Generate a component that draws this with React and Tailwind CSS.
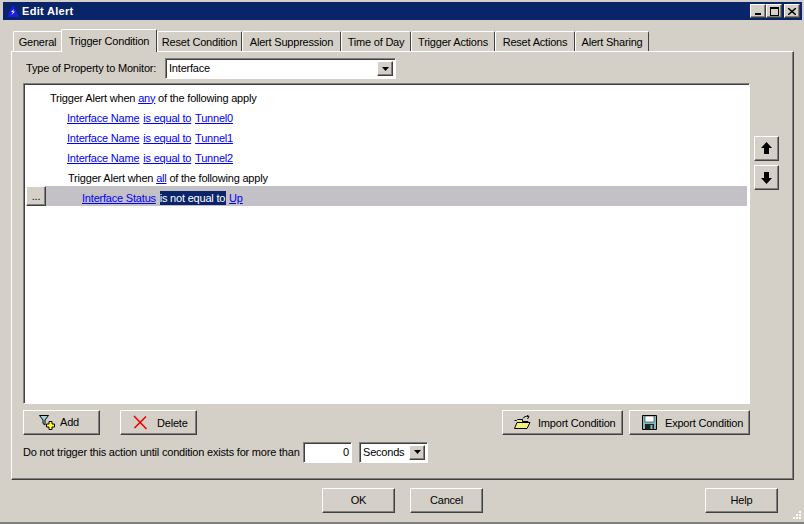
const raised = 'border border-t-white border-l-white border-r-[#404040] border-b-[#404040] shadow-[inset_-1px_-1px_0_#808080]';
const sunken = 'border border-t-[#808080] border-l-[#808080] border-r-white border-b-white shadow-[inset_1px_1px_0_#404040]';

const tabs = [
    { label: 'General', w: 'w-[49px]' },
    { label: 'Trigger Condition', w: 'w-[96px]', active: true },
    { label: 'Reset Condition', w: 'w-[85px]' },
    { label: 'Alert Suppression', w: 'w-[99px]' },
    { label: 'Time of Day', w: 'w-[70px]' },
    { label: 'Trigger Actions', w: 'w-[84px]' },
    { label: 'Reset Actions', w: 'w-[80px]' },
    { label: 'Alert Sharing', w: 'w-[74px]' },
];

function Link({ className = '', children }) {
    return <span className={`text-[#0000ff] underline ${className}`}>{children}</span>;
}

function Arrow() {
    return (
        <div className={`w-[16px] h-full flex items-center justify-center bg-[#d4d0c8] ${raised}`}>
            <svg width="7" height="4" viewBox="0 0 7 4"><path d="M0 0h7L3.5 4z" fill="#000" /></svg>
        </div>
    );
}

function Button({ className = '', children }) {
    return <div className={`flex items-center h-[25px] bg-[#d4d0c8] ${raised} ${className}`}>{children}</div>;
}

function FilterAddIcon() {
    return (
        <svg width="16" height="16" viewBox="0 0 16 16" className="shrink-0">
            <path d="M0.5 0.5h9L6 5v5L4 8.5V5z" fill="#9fd4d4" stroke="#000" />
            <path d="M10 6.5h3V9h2.5v3H13v2.5h-3V12H7.5V9H10z" fill="#ffff33" stroke="#000" />
        </svg>
    );
}

function DeleteIcon() {
    return (
        <svg width="15" height="15" viewBox="0 0 15 15" className="shrink-0">
            <path d="M1 1L13.5 14M13 1.5L1.5 13" stroke="#f00000" strokeWidth="1.6" fill="none" />
        </svg>
    );
}

function FolderIcon() {
    return (
        <svg width="17" height="15" viewBox="0 0 17 15" className="shrink-0">
            <path d="M0.5 5.5h2l1-1h5v2H14v1.5" fill="#e8e880" stroke="#000" />
            <path d="M0.5 13.5L3 7.5h13l-3 6z" fill="#f2f27a" stroke="#000" />
            <path d="M9 3.5C10 1.5 12 1 14.5 1.5M13 0l2 1.5L13.5 4" stroke="#000" fill="none" />
        </svg>
    );
}

function SaveIcon() {
    return (
        <svg width="15" height="15" viewBox="0 0 15 15" className="shrink-0">
            <path d="M0.5 0.5h14v14h-14z" fill="#7fbcc0" stroke="#000" />
            <path d="M3 1h9v6H3z" fill="#fff" stroke="#000" strokeWidth="0.5" />
            <path d="M3 9h9v5.5H3z" fill="#222" />
            <path d="M8.5 10h2v4h-2z" fill="#7fbcc0" />
        </svg>
    );
}

function WinButton({ children }) {
    return <div className={`w-[16px] h-[14px] bg-[#d4d0c8] flex items-center justify-center ${raised}`}>{children}</div>;
}

export default function App() {
    return (
        <div className="w-[804px] h-[524px] bg-[#d4d0c8] text-[11px] leading-none tracking-[-0.2px] text-black flex flex-col pt-[2px] border-b-2 border-[#808080]" style={{ fontFamily: '"Liberation Sans", sans-serif' }}>
            {/* Title bar */}
            <div className="ml-[3px] mr-[2px] h-[18px] bg-[#0a246a] flex items-center pl-[4px] pr-[2px] shrink-0">
                <svg width="12" height="12" viewBox="0 0 12 12" className="shrink-0">
                    <path d="M6 0L12 12H0z" fill="#1c1ce0" />
                    <path d="M7 4L4 7h2L4.5 10 8 6.5H6z" fill="#fff" />
                </svg>
                <span className="ml-[3px] text-white font-bold text-[11px] tracking-[0.3px]">Edit Alert</span>
                <div className="ml-auto flex">
                    <WinButton><div className="w-[6px] h-[2px] bg-black mt-[6px] mr-[1px]" /></WinButton>
                    <WinButton><div className="w-[9px] h-[9px] border border-black border-t-2" /></WinButton>
                    <div className="w-[2px]" />
                    <WinButton>
                        <svg width="8" height="7" viewBox="0 0 8 7"><path d="M0 0l8 7M8 0L0 7" stroke="#000" strokeWidth="1.4" /></svg>
                    </WinButton>
                </div>
            </div>

            {/* Tabs */}
            <div className="flex items-end h-[31px] ml-[13px] shrink-0 relative z-10">
                {tabs.map(tab => (
                    <div
                        key={tab.label}
                        className={`${tab.w} flex items-center justify-center bg-[#d4d0c8] border-t border-l border-r border-t-white border-l-white border-r-[#404040] rounded-t-[2px] pt-[2px] ${tab.active ? 'h-[23px] pb-[2px] -mb-px -ml-[1px]' : 'h-[20px]'}`}
                    >
                        {tab.label}
                    </div>
                ))}
            </div>

            {/* Panel */}
            <div className={`ml-[11px] w-[783px] h-[429px] ${raised} pl-[11px] pr-[10px] flex flex-col shrink-0`}>
                <div className="flex items-center h-[21px] mt-[6px] shrink-0">
                    <span className="ml-[3px] w-[139px]">Type of Property to Monitor:</span>
                    <div className={`w-[231px] h-[21px] bg-white ${sunken} flex items-center justify-between pl-[3px] p-[2px]`}>
                        <span>Interface</span>
                        <Arrow />
                    </div>
                </div>

                <div className="flex mt-[4px] shrink-0">
                    <div className={`w-[727px] h-[321px] bg-white ${sunken} pt-[4px] pl-[2px] pr-[2px]`}>
                        <div className="h-[20px] flex items-center pl-[24px]">
                            <span>Trigger Alert when <Link>any</Link> of the following apply</span>
                        </div>
                        {['Tunnel0', 'Tunnel1', 'Tunnel2'].map(name => (
                            <div key={name} className="h-[20px] flex items-center pl-[41px]">
                                <span><Link>Interface Name</Link> <Link className="ml-[1px]">is equal to</Link> <Link className="ml-[1px]">{name}</Link></span>
                            </div>
                        ))}
                        <div className="h-[20px] flex items-center pl-[42px]">
                            <span>Trigger Alert when <Link>all</Link> of the following apply</span>
                        </div>
                        <div className="h-[20px] -mt-[2px] flex items-center bg-[#c3c0c6]">
                            <div className={`w-[20px] h-[20px] bg-[#d4d0c8] ${raised} flex items-center justify-center`}>...</div>
                            <span className="ml-[36px] mt-[4px]">
                                <Link>Interface Status</Link> <span className="bg-[#0a246a] text-white py-[1px] ml-[1px] pr-[1px]">is not equal to</span> <Link>Up</Link>
                            </span>
                        </div>
                    </div>
                    <div className="ml-[4px] mt-[53px] flex flex-col gap-[4px]">
                        <Button className="w-[25px] justify-center">
                            <svg width="11" height="13" viewBox="0 0 11 13"><path d="M5.5 0L11 6H8v6H3V6H0z" fill="#000" /></svg>
                        </Button>
                        <Button className="w-[25px] justify-center">
                            <svg width="11" height="13" viewBox="0 0 11 13"><path d="M5.5 13L11 7H8V1H3v6H0z" fill="#000" /></svg>
                        </Button>
                    </div>
                </div>

                <div className="flex mt-[6px] w-[727px] shrink-0">
                    <Button className="w-[77px] pl-[15px] gap-[5px]"><FilterAddIcon /><span>Add</span></Button>
                    <Button className="w-[77px] ml-[20px] pl-[12px] gap-[9px]"><DeleteIcon /><span className="mt-[2px]">Delete</span></Button>
                    <Button className="w-[121px] ml-auto pl-[11px] gap-[7px]"><FolderIcon /><span className="mt-[2px]">Import Condition</span></Button>
                    <Button className="w-[121px] ml-[6px] pl-[12px] gap-[8px]"><SaveIcon /><span className="mt-[2px]">Export Condition</span></Button>
                </div>

                <div className="flex items-center mt-[6px] h-[22px] shrink-0">
                    <span className="w-[280px] whitespace-nowrap">Do not trigger this action until condition exists for more than</span>
                    <div className={`w-[49px] h-[21px] bg-white ${sunken} flex items-center justify-end pr-[2px]`}>0</div>
                    <div className={`ml-[7px] w-[69px] h-[21px] bg-white ${sunken} flex items-center justify-between pl-[3px] p-[2px]`}>
                        <span>Seconds</span>
                        <Arrow />
                    </div>
                </div>
            </div>

            {/* Footer */}
            <div className="flex items-start pt-[8px] ml-[322px] relative flex-1">
                <Button className="w-[73px] justify-center">OK</Button>
                <Button className="w-[73px] ml-[15px] justify-center">Cancel</Button>
                <Button className="w-[73px] ml-[222px] justify-center">Help</Button>
                <svg width="12" height="12" viewBox="0 0 12 12" className="absolute right-[2px] bottom-0">
                    <path d="M9 1h2v2H9zM6 4h2v2H6zM9 4h2v2H9zM3 7h2v2H3zM6 7h2v2H6zM9 7h2v2H9z" fill="#fff" />
                </svg>
            </div>
        </div>
    );
}
